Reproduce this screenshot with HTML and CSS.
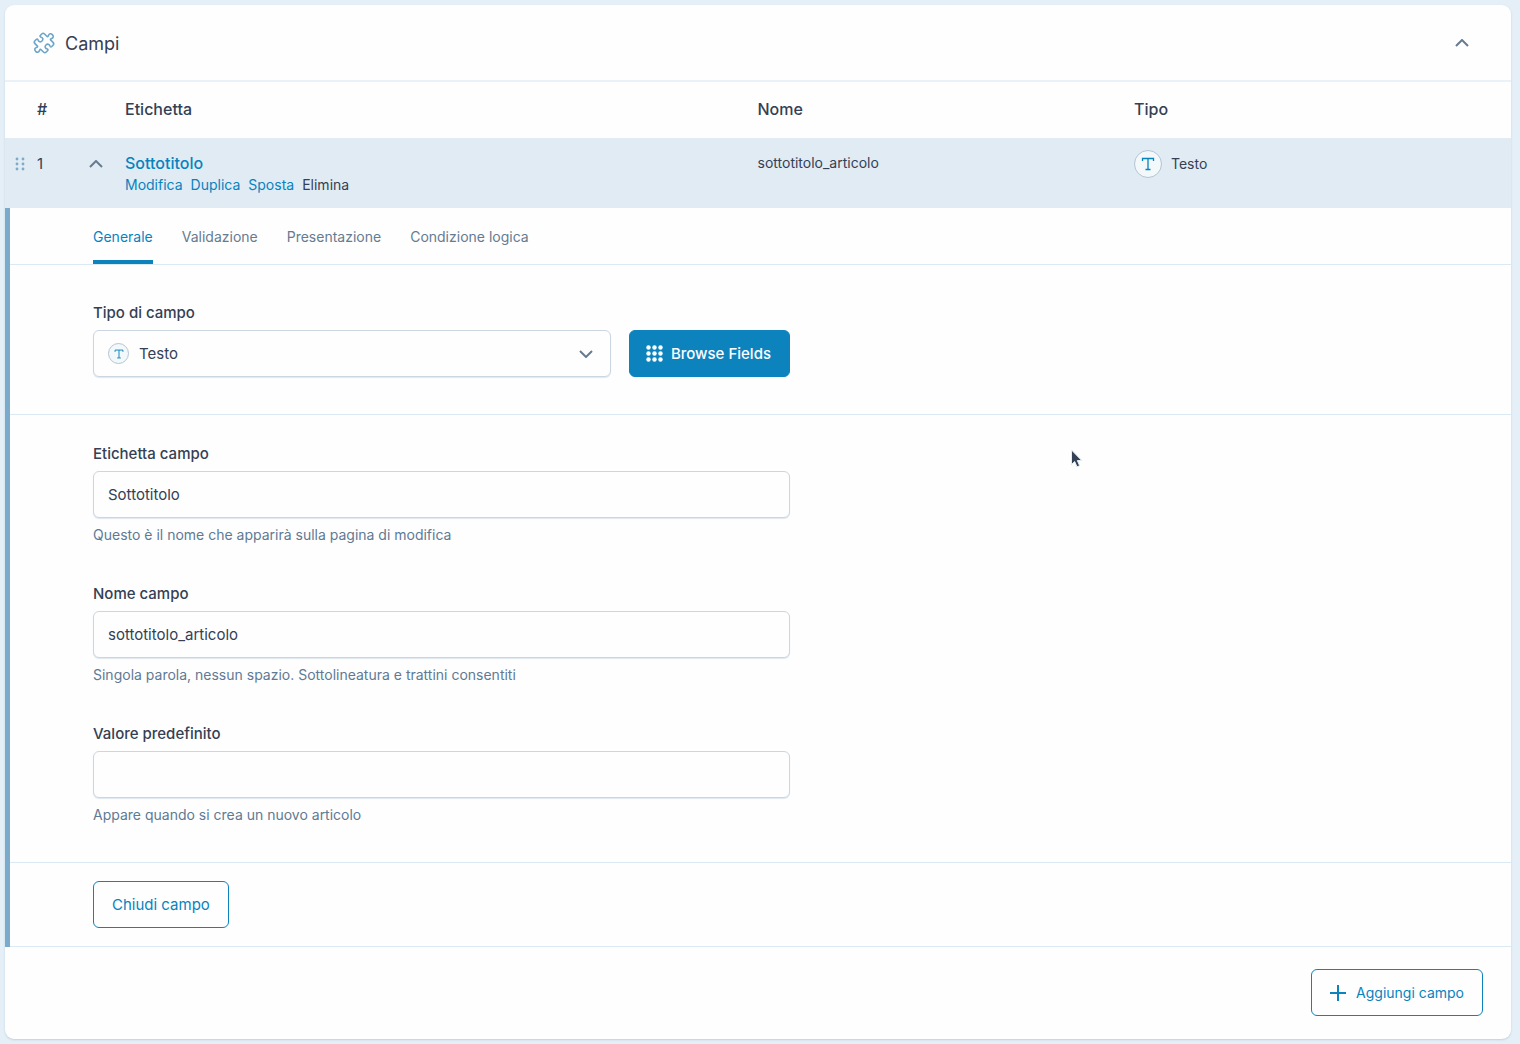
FILE: index.html
```html
<!DOCTYPE html>
<html lang="it">
<head>
<meta charset="utf-8">
<meta name="viewport" content="width=device-width, initial-scale=1">
<title>Campi</title>
<link rel="stylesheet" href="styles.css">
</head>
<body>
<main class="card">
  <header class="card-header">
    <svg class="icon-puzzle" viewBox="0 0 24 24" width="24" height="24" aria-hidden="true"><g transform="rotate(45 12 12)"><path d="M4 7.200Q4 5.200 6 5.200H9.200Q10.500 5.200 10 4C8.800 1.700 9.800.2 12 .2S15.200 1.700 14 4Q13.500 5.200 14.800 5.200H18Q20 5.200 20 7.200V9Q20 10.500 18.600 10C16.300 8.900 14.800 9.900 14.800 12S16.300 15.100 18.600 14Q20 13.500 20 15V16.800Q20 18.800 18 18.800H14.800Q13.500 18.800 14 20C15.200 22.300 14.200 23.800 12 23.800S8.800 22.300 10 20Q10.500 18.800 9.200 18.800H6Q4 18.800 4 16.800V15Q4 13.500 5.400 14C7.700 15.100 9.200 14.100 9.200 12S7.700 8.900 5.400 10Q4 10.500 4 9Z"/></g></svg>
    <h1 class="card-title">Campi</h1>
    <button class="icon-button" type="button" aria-label="Comprimi pannello">
      <svg class="chevron" viewBox="0 0 14 8" width="14" height="8" aria-hidden="true"><path d="M1 7 7 1l6 6"/></svg>
    </button>
  </header>

  <table class="fields">
    <thead>
      <tr>
        <th class="col-order" scope="col">#</th>
        <th class="col-label" scope="col">Etichetta</th>
        <th class="col-name" scope="col">Nome</th>
        <th class="col-type" scope="col">Tipo</th>
      </tr>
    </thead>
    <tbody>
      <tr>
        <td class="order-cell">
          <div class="order">
            <svg class="handle" viewBox="0 0 10 14" width="10" height="14" aria-hidden="true"><circle cx="2" cy="2" r="1.400"/><circle cx="8" cy="2" r="1.400"/><circle cx="2" cy="7" r="1.400"/><circle cx="8" cy="7" r="1.400"/><circle cx="2" cy="12" r="1.400"/><circle cx="8" cy="12" r="1.400"/></svg>
            <span class="order-number">1</span>
            <button class="icon-button" type="button" aria-label="Comprimi campo">
              <svg class="chevron" viewBox="0 0 14 8" width="14" height="8" aria-hidden="true"><path d="M1 7 7 1l6 6"/></svg>
            </button>
          </div>
        </td>
        <td>
          <a class="field-link" href="#campo">Sottotitolo</a>
          <div class="row-actions">
            <a href="#modifica">Modifica</a>
            <a href="#duplica">Duplica</a>
            <a href="#sposta">Sposta</a>
            <a class="delete" href="#elimina">Elimina</a>
          </div>
        </td>
        <td>sottotitolo_articolo</td>
        <td>
          <div class="type">
            <span class="type-icon"><svg viewBox="0 0 14 14" width="14" height="14" aria-hidden="true"><path d="M1.500 4V1.500h11V4M7 1.500v11M4.500 12.500h5"/></svg></span>
            <span>Testo</span>
          </div>
        </td>
      </tr>
    </tbody>
  </table>

  <form class="settings" id="campo">
    <nav class="tabs">
      <a class="tab active" href="#generale">Generale</a>
      <a class="tab" href="#validazione">Validazione</a>
      <a class="tab" href="#presentazione">Presentazione</a>
      <a class="tab" href="#condizione">Condizione logica</a>
    </nav>

    <section class="section section-type">
      <label class="label" for="tipo">Tipo di campo</label>
      <div class="type-row">
        <div class="select">
          <select class="control" id="tipo"><option>Testo</option></select>
          <span class="type-icon small"><svg viewBox="0 0 14 14" width="10" height="10" aria-hidden="true"><path d="M1.500 4V1.500h11V4M7 1.500v11M4.500 12.500h5"/></svg></span>
          <svg class="chevron select-arrow" viewBox="0 0 14 8" width="14" height="8" aria-hidden="true"><path d="M1 1l6 6 6-6"/></svg>
        </div>
        <button class="button primary" type="button">
          <svg class="dots" viewBox="0 0 17 17" width="17" height="17" aria-hidden="true"><circle cx="2.500" cy="2.500" r="2.200"/><circle cx="8.500" cy="2.500" r="2.200"/><circle cx="14.500" cy="2.500" r="2.200"/><circle cx="2.500" cy="8.500" r="2.200"/><circle cx="8.500" cy="8.500" r="2.200"/><circle cx="14.500" cy="8.500" r="2.200"/><circle cx="2.500" cy="14.500" r="2.200"/><circle cx="8.500" cy="14.500" r="2.200"/><circle cx="14.500" cy="14.500" r="2.200"/></svg>
          Browse Fields
        </button>
      </div>
    </section>

    <section class="section section-main">
      <div class="field">
        <label class="label" for="etichetta">Etichetta campo</label>
        <input class="control" id="etichetta" type="text" value="Sottotitolo">
        <p class="help">Questo è il nome che apparirà sulla pagina di modifica</p>
      </div>
      <div class="field">
        <label class="label" for="nome">Nome campo</label>
        <input class="control" id="nome" type="text" value="sottotitolo_articolo">
        <p class="help">Singola parola, nessun spazio. Sottolineatura e trattini consentiti</p>
      </div>
      <div class="field">
        <label class="label" for="valore">Valore predefinito</label>
        <input class="control" id="valore" type="text">
        <p class="help">Appare quando si crea un nuovo articolo</p>
      </div>
    </section>

    <div class="settings-footer">
      <button class="button" type="button">Chiudi campo</button>
    </div>
  </form>

  <footer class="card-footer">
    <button class="button add" type="button">
      <svg class="plus" viewBox="0 0 16 16" width="16" height="16" aria-hidden="true"><path d="M8 0v16M0 8h16"/></svg>
      Aggiungi campo
    </button>
  </footer>

  <svg class="pointer" viewBox="0 0 14 20" width="14" height="20" aria-hidden="true"><path d="M1.500 1v14.500l3.200-3 2.300 5.300 2.600-1.100-2.300-5.200h4.400z"/></svg>
</main>
</body>
</html>
```
FILE: styles.css
```css
*,
*::before,
*::after {
  box-sizing: border-box;
}

body {
  margin: 0;
  padding: 5px 9px 5px 5px;
  background: #e4eff7;
  color: #344054;
  font-family: Inter, "Liberation Sans", sans-serif;
  font-size: 14px;
  line-height: 20px;
}

a {
  color: #0783be;
  text-decoration: none;
}

.card {
  position: relative;
  background: #fefefe;
  border-radius: 9px;
  box-shadow: 0 1px 2px #c3d0dc;
}

.card-header {
  display: flex;
  align-items: center;
  gap: 9px;
  height: 77px;
  padding: 0 42px 0 27px;
  border-bottom: 2px solid #eaf2f8;
}

.card-title {
  flex: 1;
  margin: 0;
  padding-top: 2px;
  font-size: 18px;
  font-weight: 400;
  line-height: 24px;
}

.icon-puzzle {
  overflow: visible;
  fill: none;
  stroke: #6ea5c8;
  stroke-width: 1.6;
}

.icon-button {
  display: flex;
  padding: 0;
  border: 0;
  background: none;
}

.chevron {
  fill: none;
  stroke: #667b90;
  stroke-width: 2;
}

.fields {
  width: 100%;
  border-collapse: collapse;
  table-layout: fixed;
}

.fields th {
  height: 56px;
  padding: 0 0 2px;
  font-size: 16px;
  font-weight: 500;
  text-align: left;
}

.fields .col-order {
  width: 120px;
  padding-left: 32px;
}

.col-label {
  width: 42%;
}

.col-name {
  width: 25%;
}

.fields td {
  height: 70px;
  padding: 15px 0 0;
  background: #e0ebf4;
  vertical-align: top;
}

.order {
  display: flex;
  align-items: center;
  padding-left: 10px;
}

.handle {
  fill: #7fabc9;
}

.order-number {
  width: 64px;
  padding-left: 12px;
  font-size: 15px;
  line-height: 22px;
}

.field-link {
  display: block;
  font-size: 16px;
  font-weight: 500;
}

.row-actions {
  display: flex;
  gap: 8px;
  padding-top: 2px;
}

.row-actions .delete {
  color: #344054;
}

.type {
  display: flex;
  align-items: center;
  gap: 9px;
  margin-top: -3px;
}

.type-icon {
  display: flex;
  align-items: center;
  justify-content: center;
  width: 28px;
  height: 28px;
  border: 1px solid #b4c4d3;
  border-radius: 50%;
  background: #f3f8fb;
  fill: none;
  stroke: #0783be;
  stroke-width: 1.3;
}

.type-icon.small {
  width: 21px;
  height: 21px;
}

.settings {
  border-left: 5px solid #7babca;
}

.tabs {
  display: flex;
  gap: 29px;
  height: 57px;
  padding-left: 83px;
  border-bottom: 1px solid #dbe9f3;
}

.tab {
  padding-top: 19px;
  border-bottom: 4px solid transparent;
  color: #667b90;
}

.tab.active {
  border-color: #0d83be;
  color: #0783be;
}

.section {
  padding: 0 83px;
  border-bottom: 1px solid #dbe9f3;
}

.section-type {
  padding-top: 38px;
  padding-bottom: 37px;
}

.section-main {
  display: grid;
  gap: 39px;
  padding-top: 29px;
  padding-bottom: 37px;
}

.field,
.type-row {
  width: 100%;
  max-width: 697px;
}

.label {
  display: block;
  padding-bottom: 7px;
  font-size: 15px;
  font-weight: 500;
}

.control {
  display: block;
  width: 100%;
  height: 47px;
  margin: 0;
  padding: 0 14px;
  border: 1px solid #cbd6e1;
  border-radius: 6px;
  background: #fefefe;
  box-shadow: 0 1px 1px #dfe7ef;
  color: #344054;
  font: inherit;
  font-size: 15px;
}

.help {
  margin: 0;
  padding-top: 7px;
  color: #5f7a94;
}

.type-row {
  display: flex;
  gap: 18px;
}

.select {
  display: grid;
  flex: 1;
  align-items: center;
}

.select > * {
  grid-area: 1 / 1;
}

.select .control {
  padding-left: 45px;
  appearance: none;
}

.select .type-icon {
  margin-left: 15px;
  pointer-events: none;
}

.select-arrow {
  justify-self: end;
  margin-right: 18px;
  pointer-events: none;
}

.button {
  display: flex;
  align-items: center;
  height: 47px;
  padding: 0 18px;
  border: 1px solid #0d83be;
  border-radius: 6px;
  background: #fefefe;
  color: #0783be;
  font: inherit;
  font-size: 15px;
}

.button.primary {
  gap: 8px;
  padding: 0 18px 0 16px;
  background: #0d83be;
  color: #fefefe;
  font-weight: 500;
}

.button.add {
  gap: 10px;
  font-size: 14px;
}

.dots {
  fill: #fefefe;
}

.plus {
  fill: none;
  stroke: #0d83be;
  stroke-width: 2;
}

.settings-footer {
  padding: 18px 83px;
  border-bottom: 1px solid #dbe9f3;
}

.card-footer {
  display: flex;
  justify-content: flex-end;
  padding: 22px 28px 23px;
}

/* Mouse pointer floating over the panel */
.pointer {
  position: absolute;
  top: 444px;
  left: 1065px;
  fill: #344054;
  stroke: #e3edf5;
  stroke-width: 1;
}
```
